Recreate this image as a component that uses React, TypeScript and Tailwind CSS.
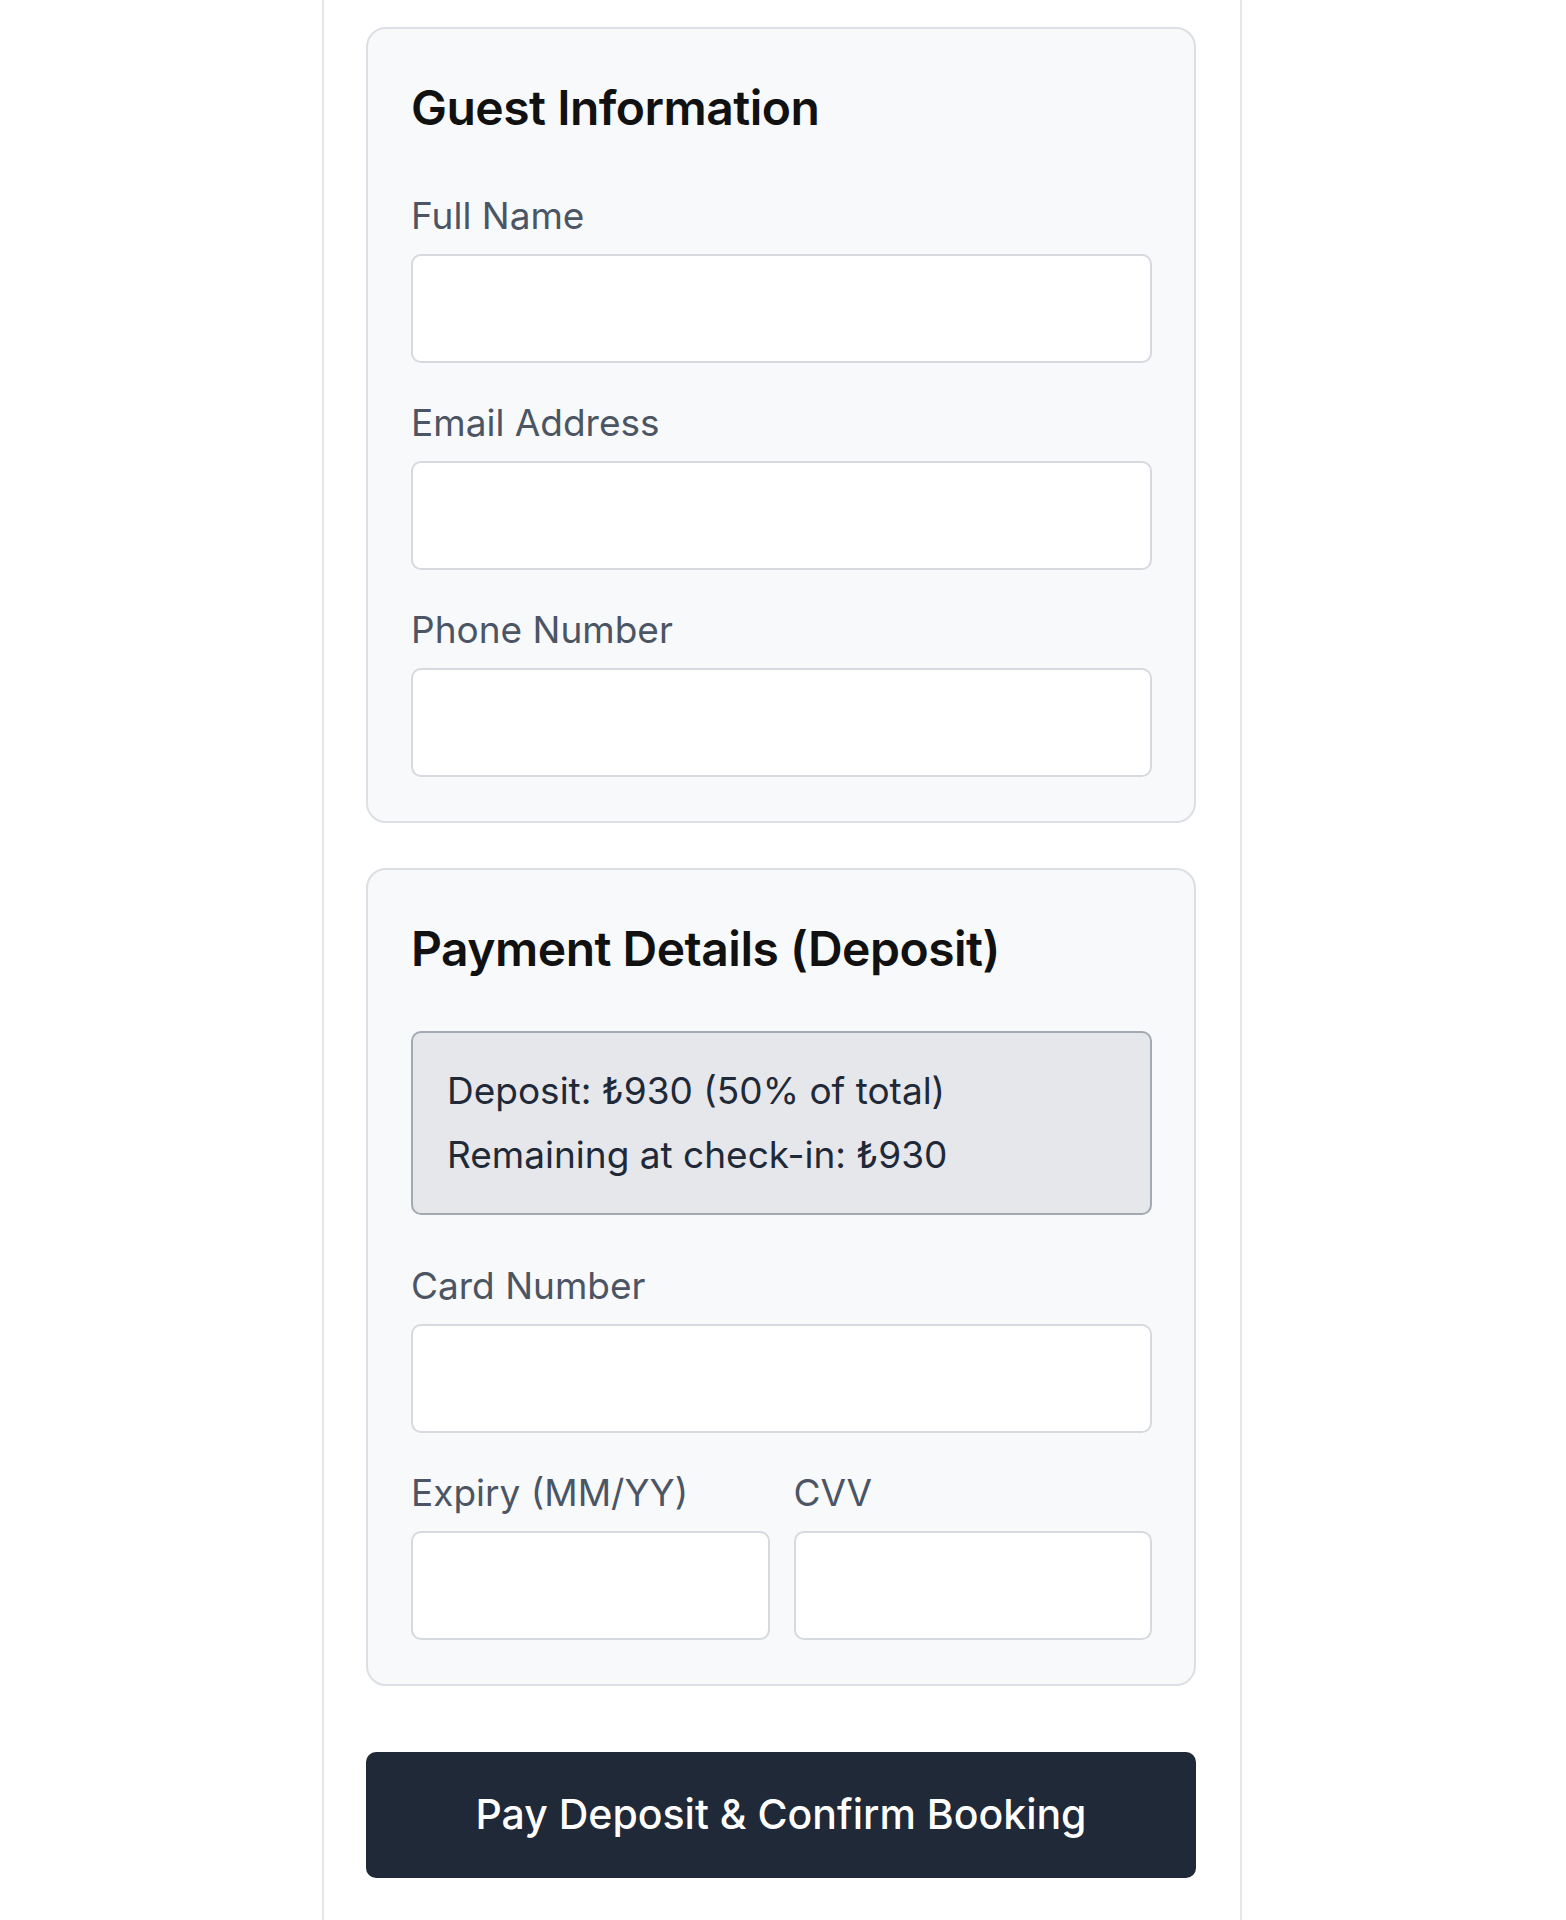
import { useState } from "react";

const font = { fontFamily: "Inter, 'Noto Sans', 'DejaVu Sans', sans-serif" };

function Field({ label, className = "" }: { label: string; className?: string }) {
  const [value, setValue] = useState("");
  return (
    <div className={className}>
      <label className="block text-[37px] leading-[48px] text-[#4b5563] mb-[14px]">{label}</label>
      <input
        type="text"
        value={value}
        onChange={(e) => setValue(e.target.value)}
        className="block w-full h-[109px] rounded-[10px] border-2 border-[#d6d9de] bg-white px-6 text-[35px] text-gray-800 outline-none"
      />
    </div>
  );
}

export default function App() {
  return (
    <div className="min-h-screen bg-white" style={font}>
      <div className="w-[920px] ml-[322px] min-h-screen border-x-2 border-[#e5e7eb] pl-[42px] pr-[44px] pt-[27px] pb-[43px]">
        <section className="rounded-[20px] border-2 border-[#dcdfe4] bg-[#f8f9fb] pl-[43px] pr-[42px] pt-[49px] pb-[44px]">
          <h2 className="text-[48px] leading-[60px] font-semibold text-[#111111] tracking-[-0.5px]">Guest Information</h2>
          <div className="mt-[54px] flex flex-col gap-[36px]">
            <Field label="Full Name" />
            <Field label="Email Address" />
            <Field label="Phone Number" />
          </div>
        </section>

        <section className="mt-[45px] rounded-[20px] border-2 border-[#dcdfe4] bg-[#f8f9fb] pl-[43px] pr-[42px] pt-[49px] pb-[44px]">
          <h2 className="text-[48px] leading-[60px] font-semibold text-[#111111] tracking-[-0.5px]">Payment Details (Deposit)</h2>
          <div className="mt-[52px] rounded-[10px] border-2 border-[#a3a9b3] bg-[#e5e7eb] px-[34px] py-[26px] text-[37px] leading-[64px] text-[#1f2937]">
            <p>Deposit: ₺930 (50% of total)</p>
            <p>Remaining at check-in: ₺930</p>
          </div>
          <Field label="Card Number" className="mt-[47px]" />
          <div className="mt-[36px] grid grid-cols-2 gap-[24px]">
            <Field label="Expiry (MM/YY)" />
            <Field label="CVV" />
          </div>
        </section>

        <button
          type="button"
          className="mt-[66px] w-full h-[126px] rounded-[10px] bg-[#1f2937] text-white text-[41px] font-medium"
        >
          Pay Deposit &amp; Confirm Booking
        </button>
      </div>
    </div>
  );
}
